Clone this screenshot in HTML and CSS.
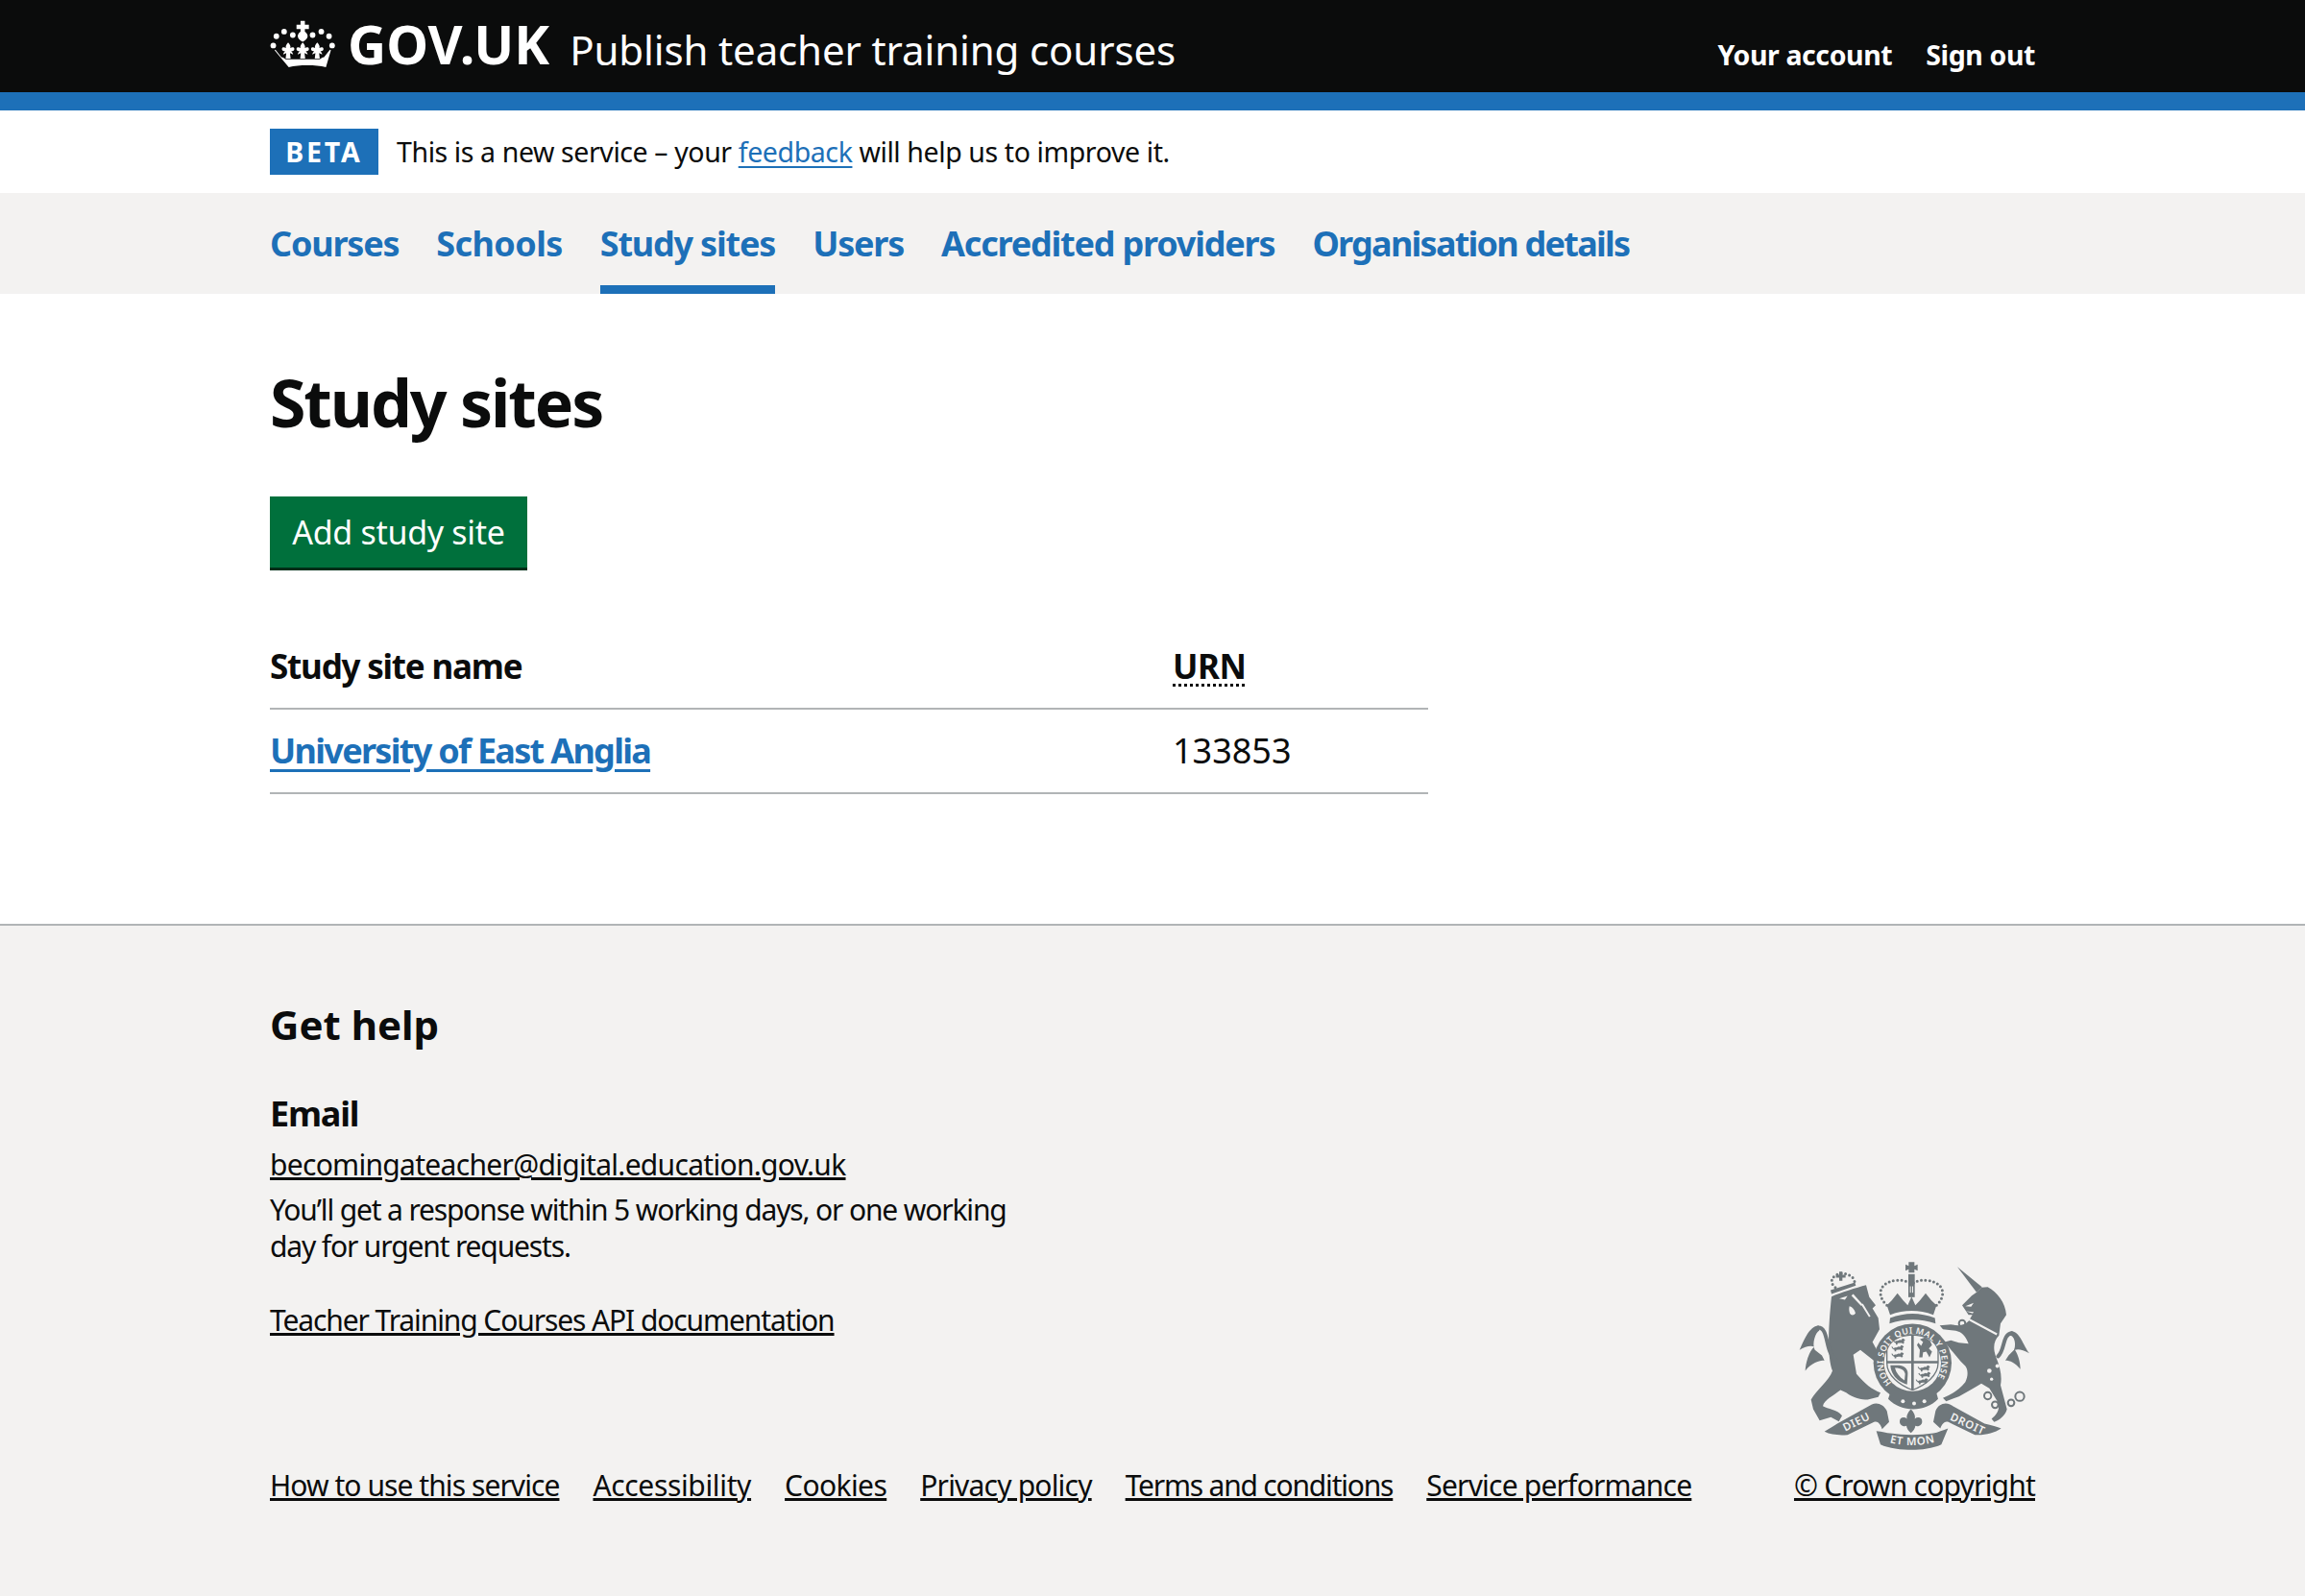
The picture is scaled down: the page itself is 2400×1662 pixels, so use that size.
FILE: index.html
```html
<!DOCTYPE html>
<html lang="en">
<head>
<meta charset="utf-8">
<title>Study sites - Publish teacher training courses</title>
<link rel="stylesheet" href="styles.css">
</head>
<body>
<header class="masthead">
  <div class="wrap masthead-row">
    <a class="brand" href="#">
      <svg class="crown" viewBox="30 60 212 155" aria-hidden="true">
        <defs>
          <path id="fleur" d="M0-26c6 6 9 12 7 18 5-4 12-4 13 2 1 6-5 9-10 7 2 4 6 7 6 12l-10-5 2 18H-8l2-18-10 5c0-5 4-8 6-12-5 2-11-1-10-7 1-6 8-6 13-2-2-6 1-12 7-18z"/>
        </defs>
        <g fill="#fff">
          <path d="M128 62h14v13h13v14h-13v8c6 4 9 10 9 14 0 7-6 13-16 19-10-6-16-12-16-19 0-4 3-10 9-14v-8h-13V75h13z"/>
          <circle cx="75" cy="97" r="9"/><circle cx="195" cy="97" r="9"/>
          <circle cx="103" cy="108" r="9"/><circle cx="167" cy="108" r="9"/>
          <circle cx="50" cy="112" r="9"/><circle cx="220" cy="112" r="9"/>
          <circle cx="40" cy="142" r="9"/><circle cx="230" cy="142" r="9"/>
          <use href="#fleur" x="135" y="158"/>
          <use href="#fleur" x="88" y="158"/>
          <use href="#fleur" x="182" y="158"/>
          <path d="M47 155l19 24 6 2 8 5h110l8-5 6-2 19-24 3 2-16 55c-18-4-37-6-60-6s-42 2-60 6L44 157z"/>
        </g>
      </svg>
      <span class="wordmark">GOV.UK</span>
    </a>
    <a class="service-name" href="#">Publish teacher training courses</a>
    <nav class="account">
      <a href="#">Your account</a>
      <a href="#">Sign out</a>
    </nav>
  </div>
</header>
<div class="blue-rule"></div>
<div class="wrap phase">
  <strong class="tag">BETA</strong>
  <span>This is a new service – your <a href="#">feedback</a> will help us to improve it.</span>
</div>
<nav class="tabs">
  <ul class="wrap tabs-list">
    <li><a href="#">Courses</a></li>
    <li><a class="tab-loose" href="#">Schools</a></li>
    <li><a class="current" href="#">Study sites</a></li>
    <li><a href="#">Users</a></li>
    <li><a href="#">Accredited providers</a></li>
    <li><a class="tab-tight" href="#">Organisation details</a></li>
  </ul>
</nav>
<main class="wrap main">
  <h1>Study sites</h1>
  <a class="button" href="#">Add study site</a>
  <table>
    <thead>
      <tr><th class="col-name">Study site name</th><th><abbr title="Unique reference number">URN</abbr></th></tr>
    </thead>
    <tbody>
      <tr><td class="site"><a href="#">University of East Anglia</a></td><td>133853</td></tr>
    </tbody>
  </table>
</main>
<footer class="footer">
  <div class="wrap footer-row">
    <div class="footer-main">
      <h2>Get help</h2>
      <h3>Email</h3>
      <p class="mail"><a href="#">becomingateacher@digital.education.gov.uk</a></p>
      <p class="note">You’ll get a response within 5 working days, or one working day for urgent requests.</p>
      <p class="api"><a href="#">Teacher Training Courses API documentation</a></p>
      <ul class="footer-links">
        <li class="ls-how"><a href="#">How to use this service</a></li>
        <li class="ls-access"><a href="#">Accessibility</a></li>
        <li class="ls-cookies"><a href="#">Cookies</a></li>
        <li><a href="#">Privacy policy</a></li>
        <li class="ls-terms"><a href="#">Terms and conditions</a></li>
        <li><a href="#">Service performance</a></li>
      </ul>
    </div>
    <div class="crest-block">
      <svg class="crest" viewBox="70 70 720 590" role="img" aria-label="Royal coat of arms">
        <defs>
          <path id="garter-arc" d="M361 449A91 91 0 1 1 489 449"/>
          <path id="ribbon-l" d="M215 600L305 555"/>
          <path id="ribbon-r" d="M540 562L640 608"/>
          <path id="ribbon-c" d="M340 630Q420 655 505 630"/>
          <path id="passant" d="M0 5C3 1 6 2 9 2L15-1 20 0 24-5 29-3 32 0 28 4 29 9 25 12 22 9 15 9 8 10 8 14 3 14 3 10 0 8-4 5-7 0-4-1Z"/>
        </defs>
        <g fill="#6f777b">
          <path d="M413 70h18v12l10-4v19l-10-4v10h-18V93l-10 4V78l10 4z"/>
          <rect x="412" y="108" width="20" height="72"/>
          <path d="M345 205 L360 190 L378 168 L396 190 L410 205 L422 178 L434 205 L448 190 L466 168 L484 190 L500 205 L490 235 Q422 210 355 235Z"/>
          <path d="M355 245Q425 218 495 245L497 262Q425 238 353 262Z"/>
          <circle cx="425" cy="385" r="122"/>
          <path d="M355 480h145l5 18c-20 22-50 32-78 32s-58-10-78-32z"/>
          <!-- lion -->
          <path d="M172 178C200 165 250 150 280 142L290 180 310 205 300 215 318 245 322 280 300 320 335 385 330 402 300 375 262 345 240 360 250 420C275 450 300 470 325 478L318 492 285 500C265 500 240 495 218 478L200 470C175 490 150 500 145 520 160 530 190 530 205 550L195 568 170 555 135 565 115 530 108 500C125 470 165 440 175 410 160 370 160 290 172 178Z"/>
          <path d="M132 268C100 272 85 318 72 345 90 335 105 330 118 335 100 352 92 385 90 410 110 385 132 378 150 378L142 362 120 345C110 325 122 290 134 284Z"/>
          <path d="M196 100h10v10h10v9h-10v10h-10v-10h-10v-9h10z"/>
          <path d="M172 170l76-26-3-10-76 24z"/>
          <!-- unicorn -->
          <path d="M565 85L642 148 625 165Z"/>
          <path d="M640 150L660 148C690 165 715 195 718 235L700 262 695 300C680 315 675 335 685 365 700 400 705 430 700 455L720 530C715 550 695 565 680 570L672 560C690 545 700 530 690 505L665 465 640 450C615 465 590 480 570 490L530 505 520 495C545 485 570 470 590 445 600 425 598 405 590 395L575 380 525 320 545 315 570 322 600 325C590 300 580 290 560 285L520 280 510 268 545 265C570 270 585 270 600 255L612 235 600 235 580 205 610 175 625 165Z"/>
          <path d="M732 286C760 284 770 330 790 355 770 345 755 340 745 345 755 360 762 385 762 405 745 385 730 378 715 378L725 362 742 345C750 325 742 300 730 300Z"/>
          <!-- ribbons -->
          <path d="M150 600C165 590 178 583 190 575L298 515C315 507 335 515 345 535L352 570 330 592C325 575 315 565 305 570L222 610C195 612 170 610 150 600Z"/>
          <path d="M702 590C690 585 672 580 650 575L542 515C525 507 505 515 497 535L490 570 512 590C517 575 527 565 537 570L620 610C650 612 680 605 702 590Z"/>
          <path d="M312 598C330 600 345 604 355 605Q425 616 490 605C505 603 520 595 536 590L515 640C490 652 450 657 425 657 390 657 350 652 325 640Z"/>
          <path d="M420 530C430 540 435 552 432 560 442 552 455 556 455 568 455 580 442 586 434 582 433 590 428 598 420 604 412 598 407 590 406 582 398 586 385 580 385 568 385 556 398 552 408 560 405 552 410 540 420 530Z"/>
        </g>
        <g fill="none" stroke="#6f777b" stroke-linecap="round">
          <path stroke-width="12" d="M185 375C150 350 165 275 130 275"/>
          <path stroke-width="12" d="M692 365C715 345 705 295 735 292"/>
          <g stroke-width="9" stroke-dasharray="0 13">
            <path d="M345 205C312 175 320 135 370 128 392 124 408 130 420 138"/>
            <path d="M500 205C532 175 524 135 474 128 452 124 436 130 424 138"/>
            <path d="M184 150C160 130 178 108 205 105 232 108 250 125 242 138"/>
          </g>
        </g>
        <g fill="#f3f2f1">
          <rect x="417" y="146" width="3" height="20"/><rect x="424" y="146" width="3" height="20"/>
          <circle cx="425" cy="385" r="89"/>
          <path d="M196 184l26-8-8 12zM228 208c9 2 16 10 19 22-5 8-14 8-18 0-2-8-3-14-1-22z"/>
          <path d="M240 170l30 34-6 3-30-32zM270 200l24 40-5 2-24-38z"/>
          <path d="M590 208l26-10-8 12zM592 224l24 2-3 5z"/>
          <path d="M604 247l86 46-3 6-88-47z"/>
          <circle cx="665" cy="410" r="7"/><circle cx="690" cy="395" r="6"/><circle cx="672" cy="436" r="5"/>
          <circle cx="395" cy="505" r="6"/><circle cx="430" cy="512" r="6"/><circle cx="462" cy="505" r="6"/>
        </g>
        <!-- shield -->
        <path fill="#f3f2f1" stroke="#6f777b" stroke-width="4" d="M345 345Q360 300 425 298 490 300 505 345V385C505 425 465 455 425 470 385 455 345 425 345 385Z"/>
        <path fill="#6f777b" d="M421 298H429V470H421ZM345 379H505V387H345Z"/>
        <g fill="#6f777b">
          <use href="#passant" x="370" y="314"/><use href="#passant" x="366" y="335"/><use href="#passant" x="366" y="357"/>
          <use href="#passant" x="448" y="398"/><use href="#passant" x="450" y="418"/><use href="#passant" x="442" y="438"/>
          <path d="M446 368L448 345 439 330 443 322 452 332 458 320 448 312 464 306 480 316 486 330 476 340 486 350 478 368 468 350 458 352 456 368Z"/>
          <path d="M356 393L384 393C404 396 412 408 410 423L408 453C390 447 375 437 367 425 360 415 356 403 356 393ZM370 401C374 416 384 430 400 440L402 420C400 408 390 401 370 401Z"/>
        </g>
        <g fill="none" stroke="#6f777b" stroke-width="6">
          <circle cx="580" cy="262" r="10"/><circle cx="568" cy="342" r="10"/>
          <circle cx="660" cy="488" r="11"/><circle cx="683" cy="516" r="10"/><circle cx="733" cy="510" r="10"/><circle cx="760" cy="490" r="14"/>
        </g>
        <g class="crest-text">
          <text class="crest-garter"><textPath href="#garter-arc" startOffset="2">HONI SOIT QUI MAL Y PENSE</textPath></text>
          <text class="crest-motto"><textPath href="#ribbon-l">DIEU</textPath></text>
          <text class="crest-motto"><textPath href="#ribbon-r">DROIT</textPath></text>
          <text class="crest-motto"><textPath href="#ribbon-c" startOffset="14">ET MON</textPath></text>
        </g>
      </svg>
      <a href="#">© Crown copyright</a>
    </div>
  </div>
</footer>
</body>
</html>
```
FILE: styles.css
```css
* { box-sizing: border-box; }
html, body { margin: 0; padding: 0; }
body {
  font-family: "Noto Sans", "Liberation Sans", sans-serif;
  color: #0b0c0c;
  background: #fff;
  width: 2400px;
  min-height: 1662px;
  font-size: 28.5px;
}
a { color: inherit; }
ul { list-style: none; margin: 0; padding: 0; }

.wrap { width: 1838px; margin: 0 auto; }

.masthead { background: #0b0c0c; height: 96px; color: #fff; }
.masthead a { color: #fff; text-decoration: none; }
.masthead-row { display: flex; align-items: flex-start; height: 96px; }
.brand { display: flex; align-items: center; height: 96px; padding-bottom: 4px; }
.crown { width: 69px; height: 50px; display: block; margin-right: 12px; }
.wordmark { font-weight: 700; font-size: 55.5px; letter-spacing: 0; line-height: 1; }
.service-name { font-size: 42px; line-height: 96px; margin-left: 21px; letter-spacing: -.12px; padding-top: 4px; height: 96px; }
.account { margin-left: auto; display: flex; gap: 35px; font-size: 28.5px; font-weight: 700; letter-spacing: -.4px; line-height: 114px; height: 96px; }

.blue-rule { height: 19px; background: #1d70b8; }

.phase { height: 86px; display: flex; align-items: center; gap: 19px; font-size: 28.5px; letter-spacing: -.4px; }
.phase a { color: #1d70b8; text-underline-offset: 4px; }
.tag { background: #1d70b8; color: #fff; font-size: 28.5px; font-weight: 700; letter-spacing: 2.8px; width: 113px; height: 48px; display: flex; align-items: center; justify-content: center; }

.tabs { background: #f3f2f1; height: 105px; }
.tabs-list { display: flex; gap: 39px; height: 105px; }
.tabs-list a { display: block; height: 105px; line-height: 105px; font-size: 36px; font-weight: 700; letter-spacing: -1.2px; color: #1d70b8; text-decoration: none; }
.tabs-list a.current { border-bottom: 9px solid #1d70b8; }
.tabs-list a.tab-loose { letter-spacing: -.6px; }
.tabs-list a.tab-tight { letter-spacing: -1.75px; }

.main { height: 656px; padding-top: 72px; }
h1 { margin: 0; font-size: 68px; line-height: 1.2; font-weight: 700; height: 139px; letter-spacing: -2.1px; }
.button { display: block; width: 268px; height: 77px; background: #00703c; color: #fff; text-decoration: none; font-size: 34px; letter-spacing: -.3px; line-height: 75px; text-align: center; border-bottom: 3px solid #002d18; }

table { border-collapse: collapse; width: 1206px; margin-top: 56px; font-size: 36px; table-layout: fixed; }
th, td { text-align: left; padding: 0; height: 88px; border-bottom: 2px solid #b1b4b6; }
td { padding-bottom: 2px; }
th { font-weight: 700; font-size: 35px; letter-spacing: -1.2px; }
.col-name { width: 940px; }
abbr { letter-spacing: -.4px; text-decoration: underline dotted 3px; text-underline-offset: 5px; }
.site a { color: #1d70b8; font-weight: 700; letter-spacing: -1.7px; text-underline-offset: 6px; }

.footer { background: #f3f2f1; border-top: 2px solid #b1b4b6; height: 700px; padding-top: 73px; font-size: 30px; letter-spacing: -.8px; }
.footer-row { display: flex; justify-content: space-between; align-items: flex-end; }
.footer h2 { margin: 0; font-size: 42px; line-height: 60px; font-weight: 700; letter-spacing: 0; }
.footer h3 { margin: 39px 0 0; font-size: 36px; line-height: 48px; font-weight: 700; letter-spacing: -1.2px; }
.footer p { margin: 0; }
.mail { margin-top: 9px !important; line-height: 40px; letter-spacing: -.7px; }
.note { width: 790px; line-height: 38px; margin-top: 8px !important; letter-spacing: -1.15px; }
.api { margin-top: 38px !important; line-height: 40px; letter-spacing: -1.1px; }
.footer-links { display: flex; gap: 35px; line-height: 40px; margin-top: 132px; }
.ls-how { letter-spacing: -.93px; }
.ls-access { letter-spacing: -.35px; }
.ls-cookies { letter-spacing: -.6px; }
.ls-terms { letter-spacing: -1.2px; }
.crest-block { display: flex; flex-direction: column; align-items: flex-end; }
.crest { width: 240px; height: 197px; display: block; margin: 0 6px 16px 0; }
.crest-block a { line-height: 40px; }
.crest-text { fill: #f3f2f1; font-weight: 600; letter-spacing: 0; }
.crest-garter { font-size: 27px; letter-spacing: 1px; }
.crest-motto { font-size: 34px; letter-spacing: 2px; }
```
